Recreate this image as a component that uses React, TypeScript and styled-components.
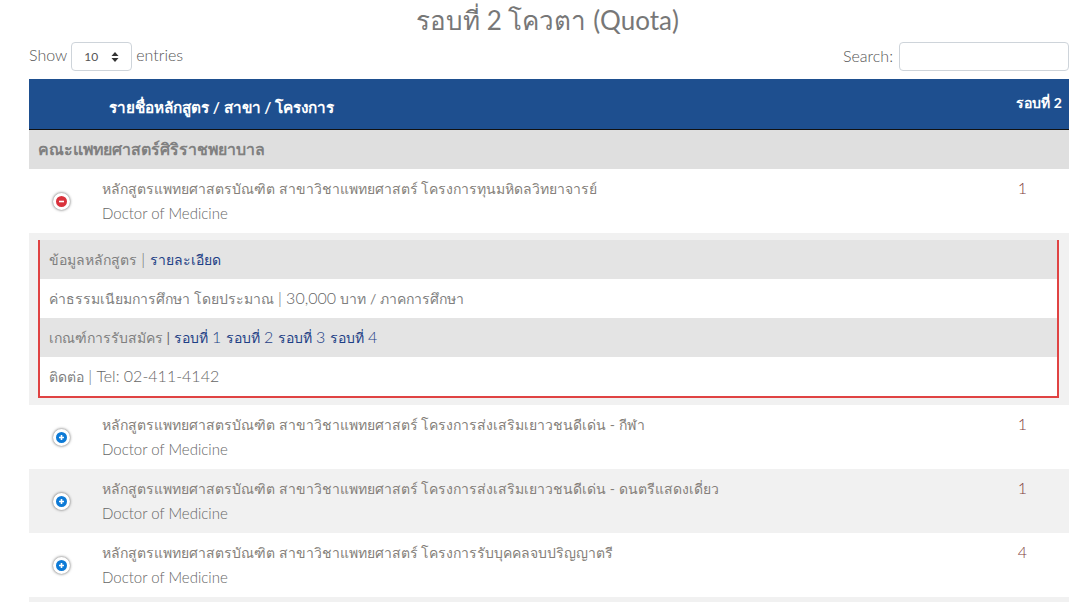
import React from "react";
import styled, { createGlobalStyle } from "styled-components";

const GlobalStyle = createGlobalStyle`
  html, body {
    margin: 0;
    padding: 0;
    height: 602px;
    overflow: hidden;
    background: #fff;
    font-family: Lato, "Noto Sans", sans-serif;
    color: #7c7c7c;
  }
`;

const Page = styled.div`
  padding: 0 9px 0 29px;
`;

const Title = styled.h2`
  margin: 0;
  height: 42px;
  padding-right: 3px;
  line-height: 40px;
  font-size: 26px;
  font-weight: 400;
  text-align: center;
  color: #777;
`;

const Controls = styled.div`
  display: flex;
  justify-content: space-between;
  height: 37px;
  font-size: 16px;
  font-weight: 300;
  color: #555;
`;

const Length = styled.label`
  display: flex;
  align-items: flex-start;
  gap: 4px;
  line-height: 25px;
`;

const FakeSelect = styled.span`
  box-sizing: border-box;
  display: flex;
  align-items: center;
  justify-content: space-between;
  width: 61px;
  height: 29px;
  padding: 2px 12px;
  border: 1px solid #ced4da;
  border-radius: 4px;
  font-size: 12px;
  font-weight: 400;
  color: #555;
`;

const SearchBox = styled.label`
  display: flex;
  align-items: flex-start;
  gap: 6px;
  line-height: 28px;
`;

const SearchInput = styled.input`
  box-sizing: border-box;
  width: 170px;
  height: 29px;
  border: 1px solid #ced4da;
  border-radius: 4px;
  outline: none;
  background: #fff;
`;

const Table = styled.div`
  width: 1040px;
`;

const HeadRow = styled.div`
  display: flex;
  justify-content: space-between;
  box-sizing: border-box;
  height: 51px;
  background: #1e4f8f;
  border-bottom: 1px solid #111;
  color: #fff;
  font-weight: 700;
`;

const HeadName = styled.div`
  padding: 18px 0 0 80px;
  font-size: 15.3px;
  line-height: 20px;
`;

const HeadRound = styled.div`
  padding: 14px 7px 0 0;
  font-size: 14px;
  line-height: 20px;
`;

const Faculty = styled.div`
  box-sizing: border-box;
  height: 39px;
  padding-left: 9px;
  background: #dfdfdf;
  font-size: 15.9px;
  font-weight: 700;
  line-height: 38px;
  color: #808080;
`;

const Row = styled.div<{ $shaded?: boolean }>`
  display: flex;
  box-sizing: border-box;
  height: 64px;
  background: ${(p) => (p.$shaded ? "#f1f1f1" : "#fff")};
`;

const TableEnd = styled.div`
  height: 5px;
  background: #f1f1f1;
`;

const ToggleCell = styled.div`
  display: flex;
  align-items: center;
  justify-content: center;
  width: 65px;
  margin-right: 8px;
  padding-top: 1px;
  flex: none;
`;

const Toggle = styled.span<{ $open?: boolean }>`
  box-sizing: border-box;
  display: flex;
  align-items: center;
  justify-content: center;
  width: 17px;
  height: 17px;
  border-radius: 50%;
  border: 3px solid #fff;
  background: ${(p) => (p.$open ? "#d9323c" : "#0d7ad6")};
  box-shadow: 0 0 3px #555;
`;

const NameCell = styled.div`
  flex: 1;
  padding-top: 7px;
  font-size: 14px;
  line-height: 25px;
`;

const ThaiName = styled.div`
  color: #857f7a;
`;

const EnglishName = styled.div`
  font-size: 15px;
  font-weight: 300;
  color: #666;
`;

const RoundCell = styled.div`
  box-sizing: border-box;
  width: 93px;
  padding-top: 6px;
  font-size: 16px;
  font-weight: 300;
  line-height: 25px;
  text-align: center;
  color: #804040;
  flex: none;
`;

const DetailRow = styled.div`
  box-sizing: border-box;
  height: 172px;
  padding: 7px 10px 0 9px;
  background: #f1f1f1;
`;

const DetailBox = styled.div`
  box-sizing: border-box;
  height: 158px;
  border: 2px solid #e04343;
  border-top: 0;
  background: #fff;
`;

const DetailLine = styled.div<{ $shaded?: boolean }>`
  box-sizing: border-box;
  height: 39px;
  padding-left: 9px;
  background: ${(p) => (p.$shaded ? "#e4e4e4" : "#fff")};
  font-size: 14px;
  line-height: 37px;
  color: #7f7f7f;
`;

const DetailLink = styled.a`
  color: #1e3f86;
  text-decoration: none;
`;

const Thin = styled.span`
  font-size: 16px;
  font-weight: 300;
`;

const Plain = styled(Thin)`
  color: #666;
`;

const Pipe = styled.span`
  color: #666;
`;

const courses = [
  { name: "โครงการส่งเสริมเยาวชนดีเด่น - กีฬา", seats: 1, shaded: false },
  { name: "โครงการส่งเสริมเยาวชนดีเด่น - ดนตรีแสดงเดี่ยว", seats: 1, shaded: true },
  { name: "โครงการรับบุคคลจบปริญญาตรี", seats: 4, shaded: false },
];

const base = "หลักสูตรแพทยศาสตรบัณฑิต สาขาวิชาแพทยศาสตร์";

const ToggleIcon = ({ open }: { open?: boolean }) => (
  <Toggle $open={open}>
    <svg width="7" height="7" viewBox="0 0 7 7">
      <path
        d={open ? "M1 3.5h5" : "M1 3.5h5M3.5 1v5"}
        stroke="#fff"
        strokeWidth="1.6"
        fill="none"
      />
    </svg>
  </Toggle>
);

export default function App() {
  return (
    <>
      <GlobalStyle />
      <Page>
        <Title>รอบที่ 2 โควตา (Quota)</Title>
        <Controls>
          <Length>
            Show
            <FakeSelect>
              10
              <svg width="8" height="12" viewBox="0 0 8 12">
                <path d="M4 1 7.5 5H.5zM4 11 .5 7h7z" fill="#333" />
              </svg>
            </FakeSelect>
            entries
          </Length>
          <SearchBox>
            Search:
            <SearchInput type="text" />
          </SearchBox>
        </Controls>
        <Table>
          <HeadRow>
            <HeadName>รายชื่อหลักสูตร / สาขา / โครงการ</HeadName>
            <HeadRound>รอบที่ 2</HeadRound>
          </HeadRow>
          <Faculty>คณะแพทยศาสตร์ศิริราชพยาบาล</Faculty>
          <Row>
            <ToggleCell>
              <ToggleIcon open />
            </ToggleCell>
            <NameCell>
              <ThaiName>{base} โครงการทุนมหิดลวิทยาจารย์</ThaiName>
              <EnglishName>Doctor of Medicine</EnglishName>
            </NameCell>
            <RoundCell>1</RoundCell>
          </Row>
          <DetailRow>
            <DetailBox>
              <DetailLine $shaded>
                ข้อมูลหลักสูตร<Plain> | </Plain>
                <DetailLink href="#">รายละเอียด</DetailLink>
              </DetailLine>
              <DetailLine>
                ค่าธรรมเนียมการศึกษา โดยประมาณ<Plain> | 30,000 </Plain>บาท / ภาคการศึกษา
              </DetailLine>
              <DetailLine $shaded>
                เกณฑ์การรับสมัคร<Pipe> | </Pipe>
                <DetailLink href="#">
                  รอบที่<Thin> 1 </Thin>
                </DetailLink>
                <DetailLink href="#">
                  รอบที่<Thin> 2 </Thin>
                </DetailLink>
                <DetailLink href="#">
                  รอบที่<Thin> 3 </Thin>
                </DetailLink>
                <DetailLink href="#">
                  รอบที่<Thin> 4</Thin>
                </DetailLink>
              </DetailLine>
              <DetailLine>
                ติดต่อ<Plain> | Tel: 02-411-4142</Plain>
              </DetailLine>
            </DetailBox>
          </DetailRow>
          {courses.map((c) => (
            <Row key={c.name} $shaded={c.shaded}>
              <ToggleCell>
                <ToggleIcon />
              </ToggleCell>
              <NameCell>
                <ThaiName>
                  {base} {c.name}
                </ThaiName>
                <EnglishName>Doctor of Medicine</EnglishName>
              </NameCell>
              <RoundCell>{c.seats}</RoundCell>
            </Row>
          ))}
          <TableEnd />
        </Table>
      </Page>
    </>
  );
}
